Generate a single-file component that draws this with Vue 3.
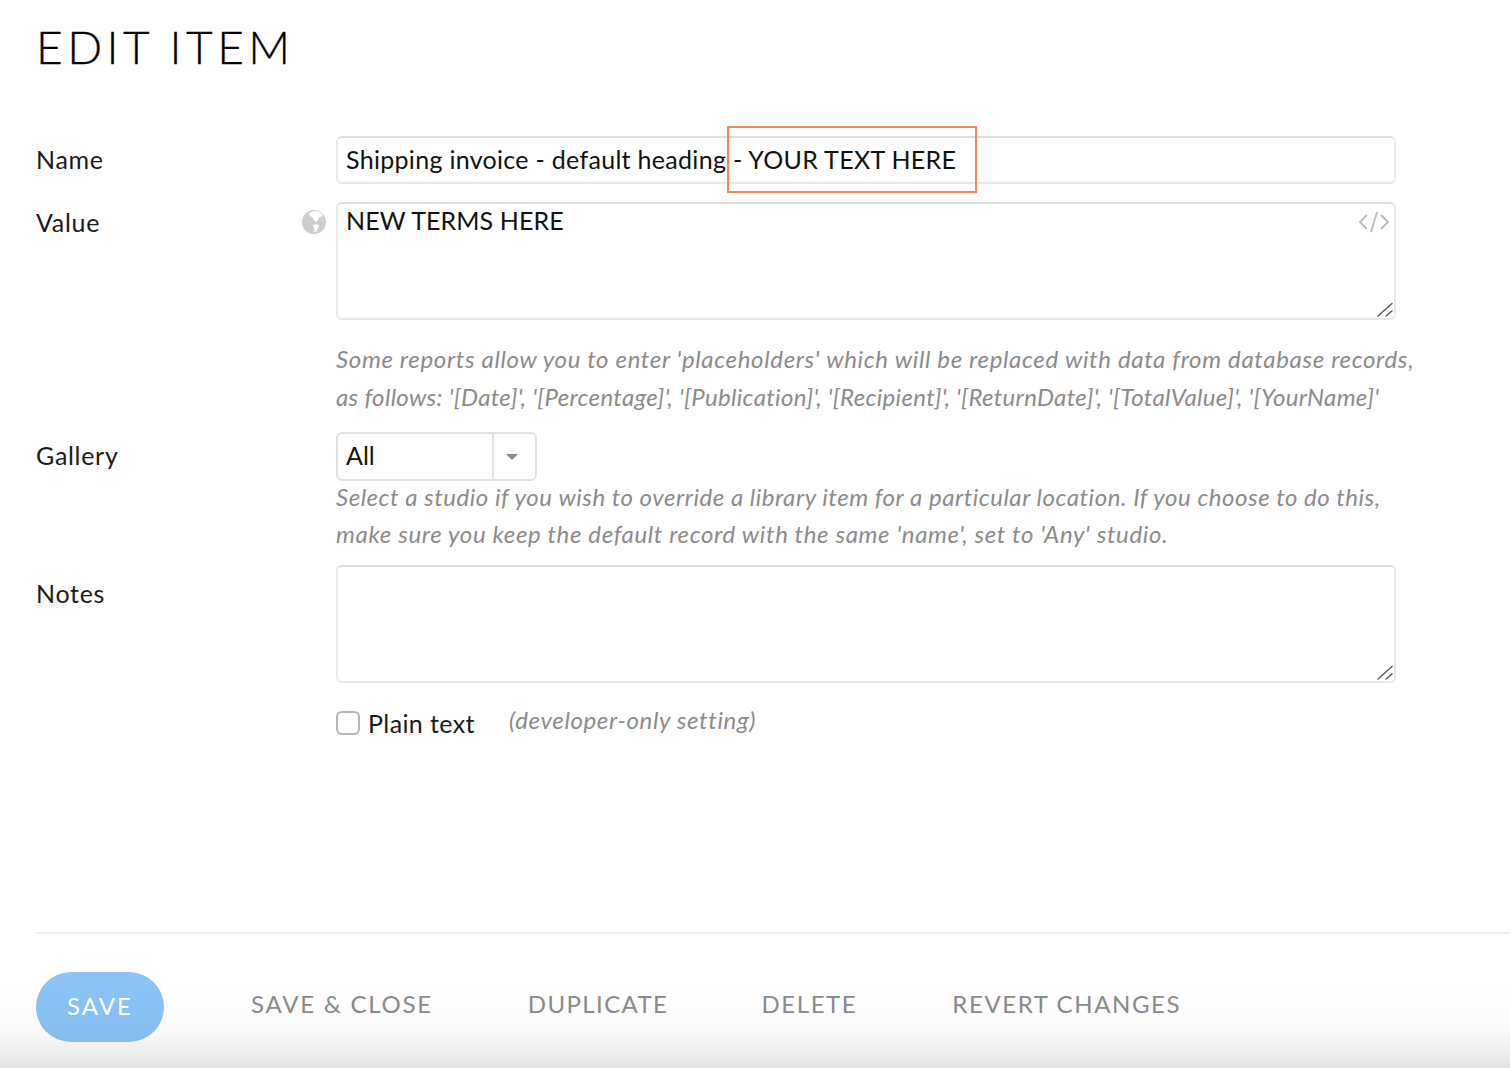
<script setup>
const actions = ['SAVE & CLOSE', 'DUPLICATE', 'DELETE', 'REVERT CHANGES']
</script>

<template>
  <div class="page">
    <h1 class="title">EDIT ITEM</h1>
    <form class="form" @submit.prevent>
      <label class="label name-label">Name</label>
      <div class="name-cell">
        <input class="field name-input" value="Shipping invoice - default heading - YOUR TEXT HERE" />
        <span class="callout"></span>
      </div>

      <div class="label value-label">
        <span>Value</span>
        <svg class="globe" viewBox="0 0 24 24" aria-hidden="true">
          <circle cx="12" cy="12" r="12" fill="#cdcdcd" />
          <path d="M7 3 11 1.2 16 1.2 20 4 21 6 17.5 7 16 10 14 12 12 10 10 7 8 6ZM11 15 15 14 17 16 15.5 19 14 22 12.5 22 12 18Z" fill="#fff" />
        </svg>
      </div>
      <div class="value-cell">
        <textarea class="field area value-area">NEW TERMS HERE</textarea>
        <svg class="code" viewBox="0 0 32 24" aria-hidden="true">
          <path d="M9 5 2 12 9 19M23 5 30 12 23 19M19 2 13 22" fill="none" stroke="#b9b9b9" stroke-width="1.8" />
        </svg>
        <svg class="grip" viewBox="0 0 16 15" aria-hidden="true">
          <path d="M0.5 14.5 15.5 1M8.5 14.5 15.5 8.5" fill="none" stroke="#555" stroke-width="1.3" />
        </svg>
      </div>

      <p class="hint hint-value">
        <span class="line-a">Some reports allow you to enter 'placeholders' which will be replaced with data from database records,</span><br />
        <span class="line-b">as follows: '[Date]', '[Percentage]', '[Publication]', '[Recipient]', '[ReturnDate]', '[TotalValue]', '[YourName]'</span>
      </p>

      <label class="label gallery-label">Gallery</label>
      <div class="gallery-cell">
        <div class="select">
          <span class="select-text">All</span>
          <span class="select-arrow"><i class="caret"></i></span>
        </div>
        <p class="hint hint-gallery">
          <span class="line-c">Select a studio if you wish to override a library item for a particular location. If you choose to do this,</span><br />
          make sure you keep the default record with the same 'name', set to 'Any' studio.
        </p>
      </div>

      <label class="label notes-label">Notes</label>
      <div class="value-cell notes-cell">
        <textarea class="field area notes-area"></textarea>
        <svg class="grip" viewBox="0 0 16 15" aria-hidden="true">
          <path d="M0.5 14.5 15.5 1M8.5 14.5 15.5 8.5" fill="none" stroke="#555" stroke-width="1.3" />
        </svg>
      </div>

      <div class="plain">
        <input id="plain" class="check" type="checkbox" />
        <label for="plain" class="plain-label">Plain text</label>
        <span class="dev">(developer-only setting)</span>
      </div>
    </form>

    <footer class="footer">
      <button class="save" type="button">SAVE</button>
      <button v-for="a in actions" :key="a" class="action" type="button">{{ a }}</button>
    </footer>
  </div>
</template>

<style>
html, body { margin: 0; background: #fff; }
</style>

<style scoped>
.page {
  width: 1510px;
  height: 1068px;
  box-sizing: border-box;
  padding-left: 36px;
  overflow: hidden;
  font-family: Lato, "Open Sans", sans-serif;
  color: #111;
  background: linear-gradient(to bottom, #fff 0, #fff 990px, #fafafa 1030px, #e4e4e4 1068px);
}
.title {
  margin: 0;
  padding-top: 18px;
  height: 136px;
  box-sizing: border-box;
  font-size: 46px;
  line-height: 58px;
  font-weight: 300;
  letter-spacing: 4.45px;
  color: #000;
  -webkit-text-stroke: 0.3px #000;
}
.form {
  display: grid;
  grid-template-columns: 300px 1060px;
  align-content: start;
  height: 796px;
  border-bottom: 2px solid #eee;
  font-size: 25px;
}
.label {
  font-size: 25px;
  line-height: 46px;
  letter-spacing: 0.7px;
  color: #1a1a1a;
}
.name-cell, .value-cell { position: relative; }
.field {
  display: block;
  width: 100%;
  box-sizing: border-box;
  border: 2px solid #e8e8e8;
  border-top-color: #dedede;
  border-radius: 6px;
  padding: 0 8px;
  background: #fff;
  color: #111;
  font-family: inherit;
  font-size: 25px;
  letter-spacing: 0.3px;
  outline: none;
}
.name-input {
  height: 48px;
  padding-bottom: 2px;
}
.callout {
  position: absolute;
  left: 391px;
  top: -10px;
  width: 250px;
  height: 67px;
  box-sizing: border-box;
  border: 2px solid #ef8a55;
}
.value-label {
  margin-top: 18px;
  display: flex;
  justify-content: space-between;
  align-items: center;
  height: 40px;
  padding-right: 10px;
}
.value-cell { margin-top: 18px; }
.area {
  height: 118px;
  padding-top: 1px;
  line-height: 30px;
  letter-spacing: 0.1px;
  resize: none;
}
.globe { width: 24px; height: 24px; }
.code {
  position: absolute;
  right: 6px;
  top: 8px;
  width: 32px;
  height: 24px;
}
.grip {
  position: absolute;
  right: 3px;
  bottom: 3px;
  width: 16px;
  height: 15px;
}
.hint {
  margin: 0;
  font-size: 24px;
  font-style: italic;
  letter-spacing: 0.64px;
  line-height: 37.5px;
  color: #8b8b8b;
  white-space: nowrap;
}
.line-a { letter-spacing: 0.66px; }
.line-b { letter-spacing: 0.33px; }
.line-c { letter-spacing: 0.53px; }
.hint-value {
  grid-column: 2;
  padding-top: 20px;
  height: 112px;
  box-sizing: border-box;
}
.gallery-cell { min-width: 0; }
.select {
  display: flex;
  width: 201px;
  height: 49px;
  box-sizing: border-box;
  border: 2px solid #e2e2e2;
  border-radius: 6px;
}
.select-text {
  flex: 1;
  padding-left: 8px;
  line-height: 43px;
  font-size: 25px;
}
.select-arrow {
  width: 43px;
  box-sizing: border-box;
  padding-right: 5px;
  display: flex;
  align-items: center;
  justify-content: center;
  border-left: 2px solid #e2e2e2;
}
.caret {
  width: 0;
  height: 0;
  border-left: 6px solid transparent;
  border-right: 6px solid transparent;
  border-top: 6px solid #8a8a8a;
}
.hint-gallery {
  height: 87px;
  margin-top: -3px;
  line-height: 37px;
}
.notes-label { line-height: 56px; }
.notes-cell { margin-top: 0; }
.notes-area { height: 118px; }
.plain {
  grid-column: 2;
  display: flex;
  align-items: center;
  margin-top: 25px;
  height: 30px;
}
.check {
  appearance: none;
  width: 24px;
  height: 24px;
  margin: 0 8px 0 0;
  box-sizing: border-box;
  border: 2px solid #b4b4b4;
  border-radius: 6px;
  background: #fff;
}
.plain-label {
  font-size: 25px;
  letter-spacing: 0.4px;
  color: #1a1a1a;
}
.dev {
  margin-left: 34px;
  font-size: 24px;
  font-style: italic;
  letter-spacing: 0.64px;
  color: #8b8b8b;
  position: relative;
  top: -4px;
}
.footer {
  display: flex;
  align-items: center;
  height: 70px;
  margin-top: 38px;
}
.save {
  width: 128px;
  height: 70px;
  margin-right: 87px;
  border: 0;
  border-radius: 35px;
  background: linear-gradient(to bottom, #8dc5f7, #84bcf0);
  color: #fff;
  font-family: inherit;
  font-size: 24px;
  letter-spacing: 2px;
  padding: 0 0 3px;
}
.action {
  border: 0;
  background: none;
  padding: 0;
  margin-right: 95px;
  margin-top: -8px;
  color: #8a8a8a;
  font-family: inherit;
  font-size: 24px;
  letter-spacing: 1.6px;
}
.action:nth-of-type(2) { letter-spacing: 1.75px; }
.action:nth-of-type(3) {
  letter-spacing: 1.4px;
  margin-right: 93px;
}
</style>
